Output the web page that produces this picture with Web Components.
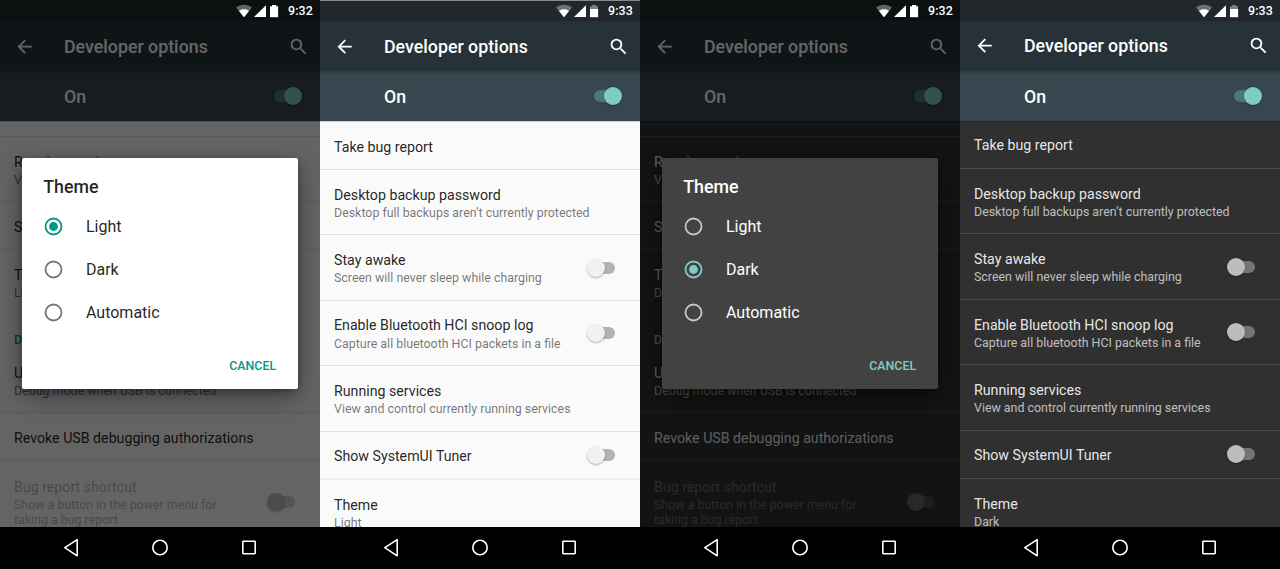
<!DOCTYPE html>
<html><head><meta charset="utf-8"><title>Developer options</title>
<style>
html,body{margin:0;padding:0;background:#000;overflow:hidden}
body{width:1280px;height:569px;display:flex;font-family:Roboto,"Noto Sans",sans-serif}
</style></head><body>
<dev-phone time="9:32" dimmed>
  <dev-row size="15.6" ></dev-row>
  <dev-row><span slot="title">Running services</span><span slot="summary">View and control currently running services</span></dev-row>
  <dev-row switch><span slot="title">Show SystemUI Tuner</span></dev-row>
  <dev-row noline><span slot="title">Theme</span><span slot="summary">Light</span></dev-row>
  <dev-category>Debugging</dev-category>
  <dev-row switch><span slot="title">USB debugging</span><span slot="summary">Debug mode when USB is connected</span></dev-row>
  <dev-row><span slot="title">Revoke USB debugging authorizations</span></dev-row>
  <dev-row switch disabled noline><span slot="title">Bug report shortcut</span><span slot="summary">Show a button in the power menu for taking a bug report</span></dev-row>
  <theme-dialog slot="dialog" selected="Light"></theme-dialog>
</dev-phone>
<dev-phone time="9:33" topline>
  <dev-row><span slot="title">Take bug report</span></dev-row>
  <dev-row><span slot="title">Desktop backup password</span><span slot="summary">Desktop full backups aren’t currently protected</span></dev-row>
  <dev-row switch><span slot="title">Stay awake</span><span slot="summary">Screen will never sleep while charging</span></dev-row>
  <dev-row switch><span slot="title">Enable Bluetooth HCI snoop log</span><span slot="summary">Capture all bluetooth HCI packets in a file</span></dev-row>
  <dev-row><span slot="title">Running services</span><span slot="summary">View and control currently running services</span></dev-row>
  <dev-row switch thick><span slot="title">Show SystemUI Tuner</span></dev-row>
  <dev-row noline><span slot="title">Theme</span><span slot="summary">Light</span></dev-row>
</dev-phone>
<dev-phone time="9:32" dimmed theme="dark">
  <dev-row size="15.6"></dev-row>
  <dev-row><span slot="title">Running services</span><span slot="summary">View and control currently running services</span></dev-row>
  <dev-row switch><span slot="title">Show SystemUI Tuner</span></dev-row>
  <dev-row noline><span slot="title">Theme</span><span slot="summary">Dark</span></dev-row>
  <dev-category>Debugging</dev-category>
  <dev-row switch><span slot="title">USB debugging</span><span slot="summary">Debug mode when USB is connected</span></dev-row>
  <dev-row><span slot="title">Revoke USB debugging authorizations</span></dev-row>
  <dev-row switch disabled noline><span slot="title">Bug report shortcut</span><span slot="summary">Show a button in the power menu for taking a bug report</span></dev-row>
  <theme-dialog slot="dialog" selected="Dark"></theme-dialog>
</dev-phone>
<dev-phone time="9:33" theme="dark" lift>
  <dev-row><span slot="title">Take bug report</span></dev-row>
  <dev-row><span slot="title">Desktop backup password</span><span slot="summary">Desktop full backups aren’t currently protected</span></dev-row>
  <dev-row switch><span slot="title">Stay awake</span><span slot="summary">Screen will never sleep while charging</span></dev-row>
  <dev-row switch><span slot="title">Enable Bluetooth HCI snoop log</span><span slot="summary">Capture all bluetooth HCI packets in a file</span></dev-row>
  <dev-row><span slot="title">Running services</span><span slot="summary">View and control currently running services</span></dev-row>
  <dev-row switch><span slot="title">Show SystemUI Tuner</span></dev-row>
  <dev-row noline><span slot="title">Theme</span><span slot="summary">Dark</span></dev-row>
</dev-phone>
<script>
function el(name, html){
  customElements.define(name, class extends HTMLElement{
    constructor(){super();this.attachShadow({mode:'open'}).innerHTML=html;}
  });
}
el('status-icons', `<style>
:host{display:flex;align-items:center;height:21px;justify-content:flex-end;padding-right:7px;color:#fff;font:500 12.4px Roboto,sans-serif}
svg{display:block}
.time{margin-left:6px;width:25px;letter-spacing:.1px}
.cap{fill-opacity:1}
:host([low]) .cap{fill-opacity:.4}
</style>
<svg width="46" height="14" viewBox="0 0 46 14">
<path d="M0 3.6C4.4-.1 11.6-.1 16 3.6L8 13.2z" fill="#fff" fill-opacity=".35"/>
<path d="M3 6.9C5.7 4.7 10.3 4.7 13 6.9L8 13.2z" fill="#fff"/>
<path d="M18 13L30 1.2V13z" fill="#fff"/>
<path class="cap" d="M36 .9h4.2v1.3H42.1V5H34V2.2h2z" fill="#fff"/>
<path d="M34 5h8.1v8.2H34z" fill="#fff"/>
</svg><span class="time"><slot></slot></span>`);

el('app-bar', `<style>
:host{display:flex;align-items:center;height:50px;padding-top:var(--bar-pad,1px);background:#263238;color:#fff;box-sizing:border-box;flex:none}
svg{display:block;flex:none;fill:currentColor}
.back{margin-left:14.4px}
h1{margin:0 0 0 28.3px;flex:1;font:500 17.8px/48px Roboto,sans-serif}
.search{margin-right:10.4px}
</style>
<svg class="back" width="21.33" height="21.33" viewBox="0 0 24 24"><path d="M20 11H7.83l5.59-5.59L12 4l-8 8 8 8 1.41-1.41L7.83 13H20v-2z"/></svg>
<h1><slot></slot></h1>
<svg class="search" width="21.33" height="21.33" viewBox="0 0 24 24"><path d="M15.5 14h-.79l-.28-.27A6.47 6.47 0 0 0 16 9.5 6.5 6.5 0 1 0 9.5 16c1.61 0 3.09-.59 4.23-1.57l.27.28v.79l5 4.99L20.49 19l-4.99-5zm-6 0C7.01 14 5 11.99 5 9.5S7.01 5 9.5 5 14 7.01 14 9.5 11.99 14 9.5 14z"/></svg>`);

el('master-bar', `<style>
:host{display:flex;align-items:center;height:50px;background:#37474f;color:#fff;flex:none;padding:0 18px 0 64px;box-sizing:border-box;box-shadow:inset 0 3px 3px -2px rgba(0,0,0,.28),0 1px 0 rgba(0,0,0,.18);position:relative}
span{flex:1;font:500 17.8px Roboto,sans-serif}
</style><span><slot></slot></span><dev-switch on></dev-switch>`);

el('dev-switch', `<style>
:host{display:block;width:28px;height:18px;flex:none;position:relative;--t:var(--thumb-off,#f1f1f1);--r:var(--track-off,#b2b2b2)}
:host([on]){--t:#80cbc4;--r:rgba(128,203,196,.36)}
:host([disabled]){--t:var(--thumb-dis,#bdbdbd);--r:var(--track-dis,#d6d6d6)}
.track{position:absolute;left:7px;top:3px;width:21px;height:12px;border-radius:6px;background:var(--r)}
:host([on]) .track{left:0;width:23px}
.thumb{position:absolute;left:0;top:0;width:18px;height:18px;border-radius:50%;background:var(--t);box-shadow:0 1px 2px rgba(0,0,0,.3)}
:host([on]) .thumb{left:10px}
</style><div class="track"></div><div class="thumb"></div>`);

class DevRow extends HTMLElement{
  constructor(){super();this.attachShadow({mode:'open'}).innerHTML=`<style>
  :host{display:flex;align-items:center;box-sizing:border-box;padding:0 25px 0 14px;border-bottom:1px solid var(--line);height:48px;flex:none;font-family:Roboto,sans-serif}
  :host([noline]){border-bottom:0}
  :host([thick]){border-bottom:2px solid #eeeeee}
  .text{flex:1;min-width:0;display:flex;flex-direction:column;padding-top:1px}
  :host([switch]) .text{padding-right:20px}
  :host([one]) .text{padding-top:var(--one-pad,1px)}
  .t{font-size:14.2px;line-height:20px;color:var(--fg)}
  :host(:not([one])) .t{margin-top:var(--t-shift,0);margin-bottom:calc(0px - var(--t-shift,0px))}
  .s{font-size:12.4px;line-height:15.4px;color:var(--sub)}
  :host([disabled]) .t,:host([disabled]) .s{color:var(--dis)}
  </style><div class="text"><div class="t"><slot name="title"></slot></div><div class="s"><slot name="summary"></slot></div></div><span id="sw"></span>`;}
  connectedCallback(){
    if(this.hasAttribute('size')){this.style.height=this.getAttribute('size')+'px';}
    else if(this.querySelector('[slot=summary]')){
      const long=this.querySelector('[slot=summary]').textContent.length>50;
      this.style.height=long?'81px':'65.4px';
    } else { this.setAttribute('one',''); }
    if(this.hasAttribute('switch')){
      const s=document.createElement('dev-switch');
      if(this.hasAttribute('disabled'))s.setAttribute('disabled','');
      this.shadowRoot.getElementById('sw').replaceWith(s);
    }
  }
}
customElements.define('dev-row',DevRow);

el('dev-category', `<style>
:host{display:flex;align-items:flex-end;height:32.6px;box-sizing:border-box;padding:0 14px;flex:none;color:var(--accent);font:500 12.4px/16px Roboto,sans-serif}
</style><slot></slot>`);

el('nav-bar', `<style>
:host{display:flex;height:42px;background:#000;flex:none;align-items:center;justify-content:center;color:#fff}
svg{display:block;fill:none;stroke:currentColor;stroke-width:1.6;stroke-linejoin:round}
</style>
<svg width="320" height="42" viewBox="0 0 320 42">
<path d="M77.2 12.6V28.8L64.8 20.7z"/>
<circle cx="160" cy="20.5" r="7.2"/>
<rect x="242.8" y="14.3" width="12.4" height="12.4" rx=".6"/>
</svg>`);

class RadioOption extends HTMLElement{
  constructor(){super();this.attachShadow({mode:'open'}).innerHTML=`<style>
  :host{display:flex;align-items:center;height:42.7px;flex:none;font:400 16px Roboto,sans-serif;color:var(--dlg-fg)}
  svg{display:block;margin-left:22.3px;flex:none}
  span{margin-left:22.5px}
  circle.o{fill:none;stroke:var(--dlg-radio);stroke-width:1.8}
  circle.i{fill:none}
  :host([checked]) circle.o{stroke:var(--accent)}
  :host([checked]) circle.i{fill:var(--accent)}
  </style><svg width="19" height="19" viewBox="0 0 19 19"><circle class="o" cx="9.5" cy="9.5" r="8"/><circle class="i" cx="9.5" cy="9.5" r="4.4"/></svg><span><slot></slot></span>`;}
}
customElements.define('radio-option',RadioOption);

class ThemeDialog extends HTMLElement{
  constructor(){super();const sel=this.getAttribute('selected');
    const opts=['Light','Dark','Automatic'].map(o=>`<radio-option ${o===sel?'checked':''}>${o}</radio-option>`).join('');
    this.attachShadow({mode:'open'}).innerHTML=`<style>
    :host{display:flex;flex-direction:column;width:275.5px;height:231px;box-sizing:border-box;background:var(--dlg-bg);border-radius:2px;box-shadow:0 8px 24px rgba(0,0,0,.4),0 2px 6px rgba(0,0,0,.25);font-family:Roboto,sans-serif}
    h2{margin:0;padding:18px 21px 0;font:500 17.8px/22px Roboto,sans-serif;color:var(--dlg-fg);height:47.3px;box-sizing:border-box}
    .list{display:flex;flex-direction:column}
    .actions{display:flex;justify-content:flex-end;padding:24.6px 21.5px 0 0}
    button{all:unset;font:500 12.4px/16px Roboto,sans-serif;color:var(--accent);letter-spacing:.02px}
    </style><h2>Theme</h2><div class="list">${opts}</div><div class="actions"><button>CANCEL</button></div>`;}
}
customElements.define('theme-dialog',ThemeDialog);

el('dev-phone', `<style>
:host{display:flex;flex-direction:column;position:relative;width:320px;height:569px;flex:none;overflow:hidden;background:var(--bg);
 --bg:#fafafa;--fg:rgba(0,0,0,.87);--sub:rgba(0,0,0,.54);--dis:rgba(0,0,0,.3);--line:#e1e1e1;--accent:#009688;
 --dlg-bg:#fff;--dlg-fg:rgba(0,0,0,.87);--dlg-radio:rgba(0,0,0,.54);--status:#21272b;--thumb-dis:#bdbdbd;--track-dis:#d2d2d2}
:host([theme=dark]){--bg:#303030;--fg:rgba(255,255,255,.9);--sub:rgba(255,255,255,.7);--dis:rgba(255,255,255,.28);--line:#4d4d4d;--accent:#80cbc4;
 --dlg-bg:#424242;--dlg-fg:#fff;--dlg-radio:rgba(255,255,255,.7);--thumb-off:#bdbdbd;--track-off:#757575;--thumb-dis:#646464;--track-dis:#4a4a4a}
:host([dimmed]){--status:#0d1011;--one-pad:2.4px}
:host([topline]){--one-pad:2.4px;--t-shift:-.4px}
:host([lift]){--bar-pad:0px}
.status{background:var(--status);flex:none;height:21px}
:host([topline]) .status{box-shadow:inset 0 1px 0 #8a8a8a}
.list{flex:1;min-height:0;overflow:hidden;display:flex;flex-direction:column}
:host([topline]) .list{padding-top:1px}
.scrim{display:none;position:absolute;left:0;right:0;top:21px;bottom:42px;background:rgba(0,0,0,.6)}
:host([dimmed]) .scrim{display:block}
.dialog{position:absolute;left:22.2px;top:158px}
</style>
<div class="status"><status-icons id="st"></status-icons></div>
<app-bar>Developer options</app-bar>
<master-bar>On</master-bar>
<div class="list"><slot></slot></div>
<nav-bar></nav-bar>
<div class="scrim"></div>
<div class="dialog"><slot name="dialog"></slot></div>`);
document.querySelectorAll('dev-phone').forEach(p=>{
  const st=p.shadowRoot.getElementById('st');
  st.textContent=p.getAttribute('time');
  if(p.getAttribute('time')==='9:33')st.setAttribute('low','');
});
</script>
</body></html>
